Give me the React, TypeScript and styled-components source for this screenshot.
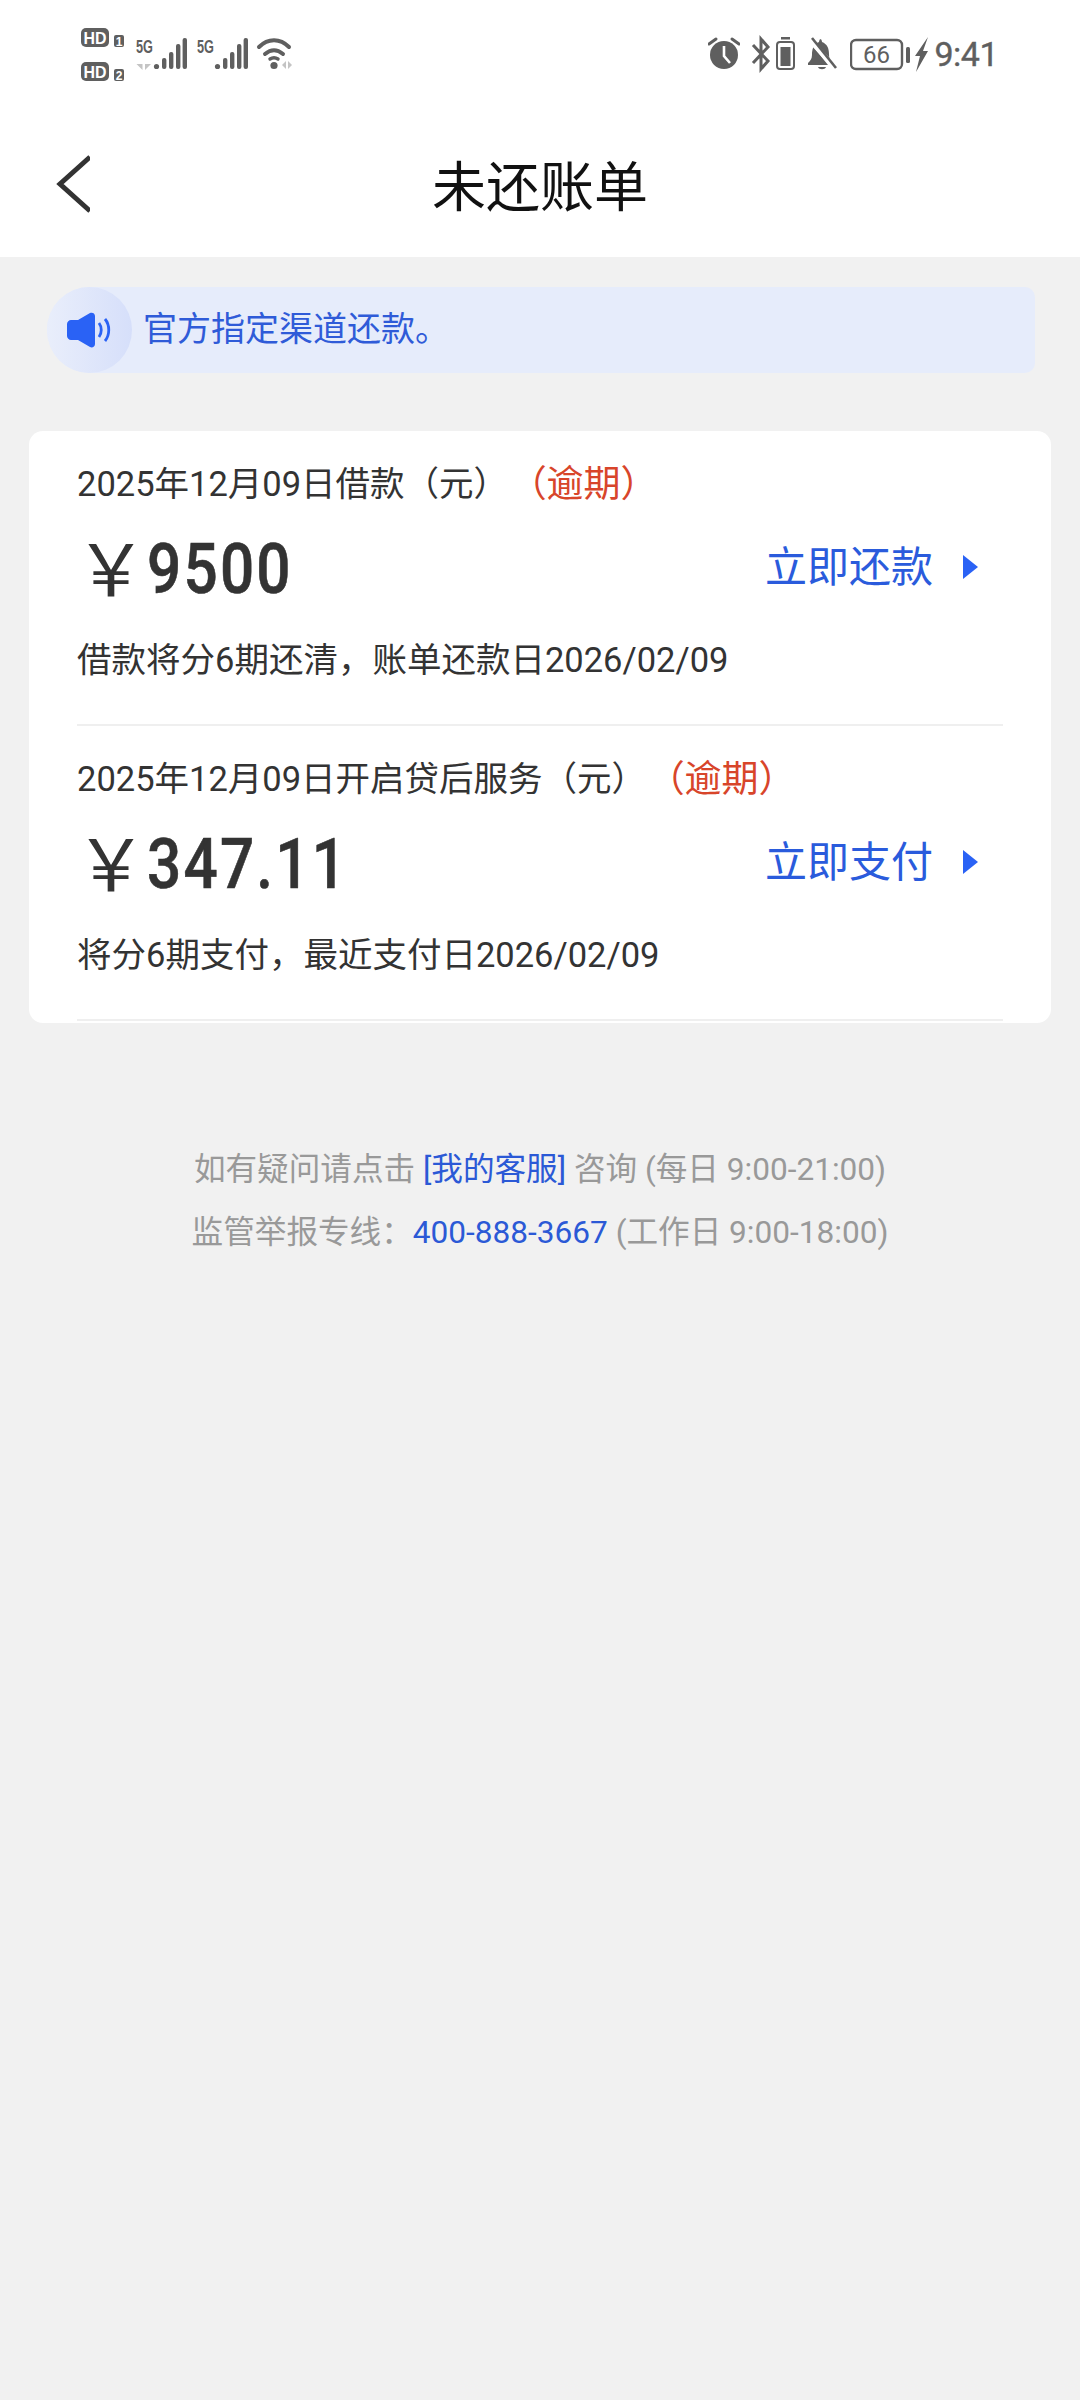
import React from "react";
import styled, { createGlobalStyle } from "styled-components";

const Global = createGlobalStyle`
  html, body { margin: 0; padding: 0; background: #f1f1f1; }
  * { box-sizing: border-box; }
  body { font-family: Roboto, "Noto Sans CJK SC", sans-serif; }
`;

const Page = styled.div`
  width: 1080px;
  height: 2400px;
  background: #f1f1f1;
  overflow: hidden;
`;
const Header = styled.header`
  background: #fff;
  height: 257px;
`;
const StatusBar = styled.div`
  height: 110px;
  padding: 24px 82px 0 81px;
  display: flex;
  justify-content: space-between;
  align-items: flex-start;
`;
const StatusGroup = styled.div`
  display: flex;
  align-items: flex-start;
  gap: 10px;
`;
const RightGroup = styled.div`
  display: flex;
  align-items: center;
  height: 60px;
  gap: 5px;
`;
const Clock = styled.span`
  font-size: 34px;
  line-height: 40px;
  color: #5f5f5f;
  letter-spacing: -0.5px;
  -webkit-text-stroke: 0.4px #5f5f5f;
`;
const Nav = styled.nav`
  height: 147px;
  display: flex;
  align-items: center;
  justify-content: center;
  position: relative;
`;
const BackIcon = styled.svg`
  position: absolute;
  left: 50px;
  top: 40px;
`;
const Title = styled.h1`
  margin: 0;
  font-size: 54px;
  font-weight: 400;
  color: #111;
  font-family: "Noto Sans CJK SC", sans-serif;
  line-height: 72px;
`;
const Banner = styled.div`
  margin: 30px 45px 0 47px;
  height: 86px;
  background: #e6ecfb;
  border-radius: 43px 10px 10px 43px;
  display: flex;
  align-items: center;
`;
const SpeakerCircle = styled.div`
  width: 85px;
  height: 86px;
  border-radius: 50%;
  background: linear-gradient(90deg, #e9eefb 0%, #d6dffa 100%);
  display: flex;
  align-items: center;
  justify-content: center;
  flex: none;
`;
const BannerText = styled.span`
  margin-left: 11px;
  margin-bottom: 7px;
  font-size: 34px;
  color: #2f5bd8;
  font-family: "Noto Sans CJK SC", sans-serif;
`;
const Card = styled.section`
  margin: 58px 29px 0;
  background: #fff;
  border-radius: 14px;
  overflow: hidden;
  height: 592px;
  padding: 0 48px;
`;
const Bill = styled.article`
  height: 295px;
  border-bottom: 2px solid #efefef;
  padding-top: 29px;
`;
const BillTitle = styled.div`
  font-size: 34.5px;
  line-height: 48px;
  color: #333;
  white-space: nowrap;
`;
const Overdue = styled.span`
  color: #d8452a;
  margin-left: 20px;
  font-size: 37px;
  position: relative;
  top: 1px;
`;
const AmountRow = styled.div`
  height: 92px;
  margin-top: 15px;
  display: flex;
  align-items: center;
  justify-content: space-between;
`;
const Amount = styled.div`
  display: flex;
  align-items: center;
  margin-left: -2px;
  color: #333;
`;
const Yen = styled.span`
  font-size: 72px;
  line-height: 92px;
  font-family: "Noto Sans CJK SC", sans-serif;
  margin-top: -8px;
  width: 72px;
  font-weight: 400;
`;
const Digits = styled.span`
  display: inline-block;
  font-size: 70px;
  line-height: 92px;
  font-weight: 500;
  letter-spacing: 2.6px;
  -webkit-text-stroke: 0.6px #333;
  transform: scaleX(0.86);
  transform-origin: left center;
`;
const Action = styled.div`
  display: flex;
  align-items: center;
  color: #2a5bdc;
  font-size: 42px;
  font-family: "Noto Sans CJK SC", sans-serif;
  gap: 30px;
  margin-right: 25px;
  margin-top: -4px;
`;
const ActionLabel = styled.span`
  margin-bottom: 8px;
`;
const Note = styled.div`
  margin-top: 21px;
  font-size: 34.5px;
  line-height: 48px;
  color: #333;
  white-space: nowrap;
`;
const Footer = styled.footer`
  margin-top: 115px;
  text-align: center;
  font-size: 31.6px;
  line-height: 63px;
  color: #999;
`;
const Link = styled.span`
  color: #2b59d6;
`;

const F = "#5f5f5f";

const SimStack = () => (
  <svg width="45" height="60" viewBox="81 24 45 60">
    <rect x="81" y="28" width="28" height="19" rx="5" fill={F} />
    <text x="95" y="43.5" textAnchor="middle" fontSize="17" fontWeight="700" fill="#fff" fontFamily="Liberation Sans" textLength="23" lengthAdjust="spacingAndGlyphs">HD</text>
    <rect x="114" y="35" width="10" height="12" rx="2" fill={F} />
    <text x="119" y="46" textAnchor="middle" fontSize="12" fontWeight="700" fill="#fff" fontFamily="Liberation Sans">1</text>
    <rect x="81" y="62" width="28" height="19" rx="5" fill={F} />
    <text x="95" y="77.5" textAnchor="middle" fontSize="17" fontWeight="700" fill="#fff" fontFamily="Liberation Sans" textLength="23" lengthAdjust="spacingAndGlyphs">HD</text>
    <rect x="114" y="69" width="10" height="12" rx="2" fill={F} />
    <text x="119" y="80" textAnchor="middle" fontSize="12" fontWeight="700" fill="#fff" fontFamily="Liberation Sans">2</text>
  </svg>
);

const Signal = ({ arrows }: { arrows?: boolean }) => (
  <svg width="51" height="60" viewBox="136 24 51 60">
    <text x="136" y="52.5" fontSize="19" fontWeight="700" fill={F} fontFamily="Liberation Sans Narrow, Liberation Sans" textLength="17" lengthAdjust="spacingAndGlyphs">5G</text>
    {arrows && (
      <g fill="#c4c4c4">
        <path d="M142.5 58v12l-6-6h6z" />
        <path d="M145 58v12l6-6h-6z" />
      </g>
    )}
    <circle cx="156.5" cy="66.5" r="2.6" fill={F} />
    <rect x="162" y="58" width="4.4" height="11" rx="2" fill={F} />
    <rect x="169" y="52" width="4.4" height="17" rx="2" fill={F} />
    <rect x="176" y="44" width="4.4" height="25" rx="2" fill={F} />
    <rect x="182.6" y="38" width="4.4" height="31" rx="2" fill={F} />
  </svg>
);

const Wifi = () => (
  <svg width="38" height="60" viewBox="256 24 38 60" style={{ marginLeft: -2 }}>
    <g fill="none" stroke={F} strokeWidth="4" strokeLinecap="round">
      <path d="M259 47c9-9 21-9 30 0" />
      <path d="M265 54c6-5 12-5 18 0" />
    </g>
    <circle cx="274" cy="65.5" r="3.6" fill={F} />
    <path d="M270 59c3-2 5-2 8 0" fill="none" stroke={F} strokeWidth="3.4" strokeLinecap="round" />
    <g fill="#c4c4c4">
      <path d="M286 61v8l-4-4z" />
      <path d="M288 61v8l4-4z" />
    </g>
  </svg>
);

const Alarm = () => (
  <svg width="32" height="40" viewBox="709 34 32 40">
    <circle cx="725" cy="55" r="14" fill={F} />
    <path d="M725 46v10l6 7" fill="none" stroke="#fff" strokeWidth="2.6" />
    <path d="M710 44l7-5M740 44l-7-5" stroke={F} strokeWidth="3" strokeLinecap="round" />
  </svg>
);
const Bluetooth = () => (
  <svg width="20" height="40" viewBox="752 34 20 40" style={{ marginLeft: 6 }}>
    <path d="M754 45l15 16-7 8V39l7 8-15 16" fill="none" stroke={F} strokeWidth="3" />
  </svg>
);
const SmallBattery = () => (
  <svg width="20" height="40" viewBox="776 34 20 40">
    <rect x="781" y="37" width="9" height="2.5" fill={F} />
    <rect x="777" y="42" width="17" height="27" rx="3" fill="none" stroke={F} strokeWidth="2" />
    <rect x="780.5" y="47" width="10" height="19" fill={F} />
  </svg>
);
const BellOff = () => (
  <svg width="29" height="40" viewBox="807 34 29 40" style={{ marginLeft: 7 }}>
    <path d="M821 39c-2 0-3 1-3 3-6 2-7 8-7 13 0 4-2 6-4 8v2h20l-16-20 0 0 20 20h-1v-3c-1-1-2-4-2-8 0-6-2-10-7-12 0-2-1-3-3-3z" fill={F} />
    <path d="M809 40l26 29" stroke="#fff" strokeWidth="5" />
    <path d="M811 38l24 30" stroke={F} strokeWidth="2.6" />
    <path d="M817 67h8c-1 3-7 3-8 0z" fill={F} />
  </svg>
);
const MainBattery = () => (
  <svg width="60" height="40" viewBox="848 34 60 40" style={{ marginLeft: 8 }}>
    <rect x="849" y="40" width="51" height="29" rx="5" fill="none" stroke={F} strokeWidth="2.4" />
    <text x="874.5" y="63" textAnchor="middle" fontSize="24" fill={F} fontFamily="Roboto">66</text>
    <rect x="904" y="47" width="4" height="16" rx="1.5" fill={F} />
  </svg>
);
const Bolt = () => (
  <svg width="14" height="40" viewBox="914 34 14 40">
    <path d="M927 37l-13 19h5l-4 16 12-21h-5z" fill={F} />
  </svg>
);

const Speaker = () => (
  <svg width="45" height="36" viewBox="67 312 45 36">
    <path d="M71 320h7l12-7c2-1 5 0 5 3v28c0 3-3 4-5 3l-12-7h-7c-2 0-4-2-4-4v-12c0-2 2-4 4-4z" fill="#2a62f5" />
    <path d="M99 323c3 4 3 10 0 14" fill="none" stroke="#2a62f5" strokeWidth="2.8" />
    <path d="M105 319c5 6 5 16 0 22" fill="none" stroke="#2a62f5" strokeWidth="2.8" />
  </svg>
);

const Arrow = () => (
  <svg width="15" height="24" viewBox="0 0 15 24">
    <path d="M0 0l15 12L0 24z" fill="#2a62f5" />
  </svg>
);

const bills = [
  { title: "2025年12月09日借款（元）", amount: "9500", action: "立即还款", note: "借款将分6期还清，账单还款日2026/02/09" },
  { title: "2025年12月09日开启贷后服务（元）", amount: "347.11", action: "立即支付", note: "将分6期支付，最近支付日2026/02/09" },
];

export default function App() {
  return (
    <Page>
      <Global />
      <Header>
        <StatusBar>
          <StatusGroup>
            <SimStack />
            <Signal arrows />
            <Signal />
            <Wifi />
          </StatusGroup>
          <RightGroup>
            <Alarm />
            <Bluetooth />
            <SmallBattery />
            <BellOff />
            <MainBattery />
            <Bolt />
            <Clock>9:41</Clock>
          </RightGroup>
        </StatusBar>
        <Nav>
          <BackIcon width="40" height="68" viewBox="0 0 40 68">
            <path d="M40 7L10 34l30 27" fill="none" stroke="#333" strokeWidth="5" />
          </BackIcon>
          <Title>未还账单</Title>
        </Nav>
      </Header>
      <Banner>
        <SpeakerCircle>
          <Speaker />
        </SpeakerCircle>
        <BannerText>官方指定渠道还款。</BannerText>
      </Banner>
      <Card>
        {bills.map((b) => (
          <Bill key={b.amount}>
            <BillTitle>
              {b.title}
              <Overdue>（逾期）</Overdue>
            </BillTitle>
            <AmountRow>
              <Amount>
                <Yen>￥</Yen>
                <Digits>{b.amount}</Digits>
              </Amount>
              <Action>
                <ActionLabel>{b.action}</ActionLabel>
                <Arrow />
              </Action>
            </AmountRow>
            <Note>{b.note}</Note>
          </Bill>
        ))}
      </Card>
      <Footer>
        <div>
          如有疑问请点击 <Link>[我的客服]</Link> 咨询 (每日 9:00-21:00)
        </div>
        <div>
          监管举报专线：<Link>400-888-3667</Link> (工作日 9:00-18:00)
        </div>
      </Footer>
    </Page>
  );
}
